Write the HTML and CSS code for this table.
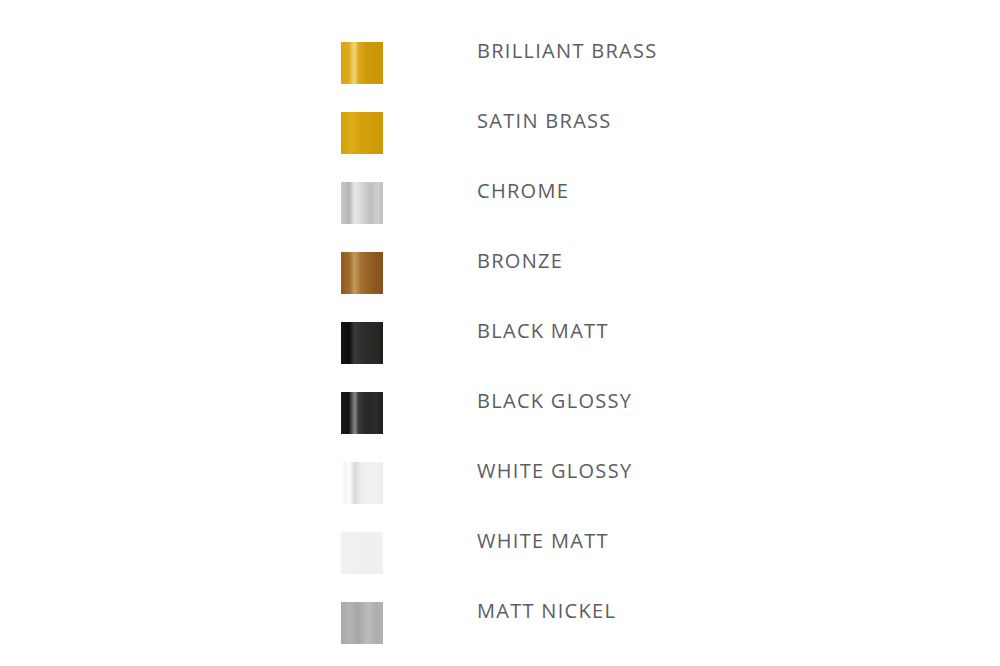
FILE: index.html
```html
<!DOCTYPE html>
<html>
<head>
<meta charset="utf-8">
<link rel="stylesheet" href="styles.css">
</head>
<body>
<ul class="finishes">
  <li class="finish"><span class="swatch brilliant-brass"></span><span class="label">BRILLIANT BRASS</span></li>
  <li class="finish"><span class="swatch satin-brass"></span><span class="label">SATIN BRASS</span></li>
  <li class="finish"><span class="swatch chrome"></span><span class="label">CHROME</span></li>
  <li class="finish"><span class="swatch bronze"></span><span class="label">BRONZE</span></li>
  <li class="finish"><span class="swatch black-matt"></span><span class="label">BLACK MATT</span></li>
  <li class="finish"><span class="swatch black-glossy"></span><span class="label">BLACK GLOSSY</span></li>
  <li class="finish"><span class="swatch white-glossy"></span><span class="label">WHITE GLOSSY</span></li>
  <li class="finish"><span class="swatch white-matt"></span><span class="label">WHITE MATT</span></li>
  <li class="finish"><span class="swatch matt-nickel"></span><span class="label">MATT NICKEL</span></li>
</ul>
</body>
</html>
```
FILE: styles.css
```css
html, body {
  margin: 0;
  padding: 0;
  background: #ffffff;
}
.finishes {
  list-style: none;
  margin: 0;
  padding: 42px 0 0 341px;
  display: flex;
  flex-direction: column;
  gap: 28px;
}
.finish {
  display: flex;
  align-items: flex-start;
  gap: 94px;
  height: 42px;
}
.swatch {
  width: 42px;
  height: 42px;
  flex: none;
}
.label {
  font-family: "Open Sans", "Noto Sans", sans-serif;
  font-size: 20px;
  line-height: 17px;
  letter-spacing: 1.3px;
  color: #5c5d62;
}
.brilliant-brass {
  background: linear-gradient(90deg, #d9a30c 0%, #dcaa20 18%, #f2d67a 32%, #dcaa1e 42%, #cf9a08 60%, #c99406 100%);
}
.satin-brass {
  background: linear-gradient(90deg, #d4a00a 0%, #dcae1a 25%, #d6a20c 45%, #cc9806 100%);
}
.chrome {
  background: linear-gradient(90deg, #c8c8c8 0%, #b4b4b4 20%, #e6e6e6 32%, #d8d8d8 50%, #bfbfbf 70%, #cfcfcf 88%, #c0c0c0 100%);
}
.bronze {
  background: linear-gradient(90deg, #8d5a22 0%, #a06b2e 20%, #c59a5c 32%, #a37030 48%, #8f5c20 75%, #84531b 100%);
}
.black-matt {
  background: linear-gradient(90deg, #151515 0%, #0c0c0c 20%, #3a3a3a 32%, #2c2c28 55%, #262624 90%, #1a1a1a 100%);
}
.black-glossy {
  background: linear-gradient(90deg, #1a1a1a 0%, #111111 18%, #8a8a8a 33%, #3a3a3a 42%, #262626 60%, #2c2c2c 85%, #1c1c1c 100%);
}
.white-glossy {
  background: linear-gradient(90deg, #ffffff 0%, #f2f2f2 10%, #ffffff 20%, #d8d8d8 32%, #ececec 48%, #f2f2f2 75%, #ededed 100%);
}
.white-matt {
  background: linear-gradient(90deg, #f2f2f2 0%, #efefef 40%, #eeeeee 70%, #f1f1f1 100%);
}
.matt-nickel {
  background: linear-gradient(90deg, #a8a8a8 0%, #b4b4b4 20%, #a6a6a6 40%, #bcbcbc 65%, #adadad 85%, #b2b2b2 100%);
}
```
